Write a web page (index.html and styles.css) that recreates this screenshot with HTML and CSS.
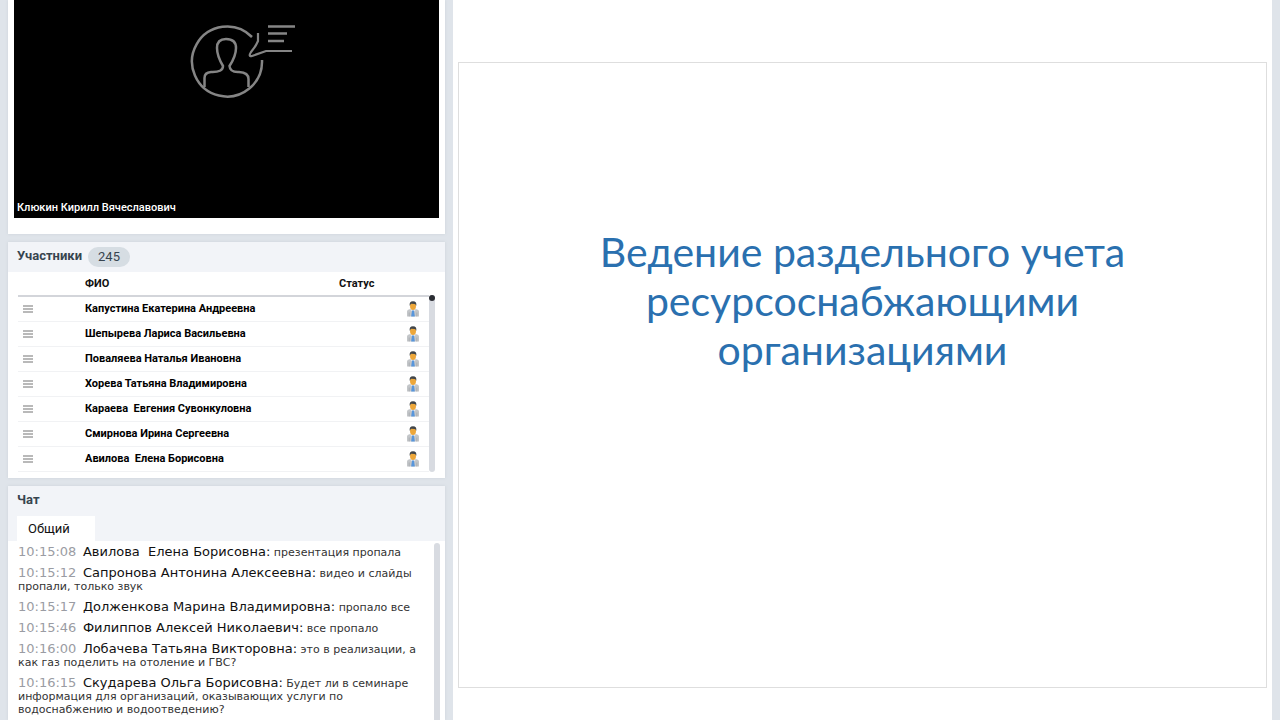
FILE: index.html
```
<!DOCTYPE html>
<html lang="ru">
<head>
<meta charset="utf-8">
<meta name="viewport" content="width=device-width, initial-scale=1">
<title>Вебинар</title>
<link rel="stylesheet" href="styles.css">
</head>
<body>
<svg class="defs" aria-hidden="true">
  <symbol id="lines" viewBox="0 0 10 9">
    <path d="M0 1h10M0 4h10M0 7h10" stroke="#a2a2a2" stroke-width="1.6" fill="none"/>
  </symbol>
  <symbol id="person" viewBox="0 0 12 16">
    <path d="M0 15.5V10.5Q0 8.6 2.5 8.2L6 7.4l3.5.8Q12 8.6 12 10.5V15.5z" fill="#c3c6c9"/>
    <path d="M2.2 11.5v4M9.8 11.5v4" stroke="#a5a8ac" stroke-width=".8"/>
    <path d="M4 7.2h4l.6 1.8L6 11.5 3.4 9z" fill="#e7ebf0"/>
    <path d="M5 9.6h2l.8 5.9H4.2z" fill="#5796dc"/>
    <ellipse cx="6" cy="5" rx="3" ry="4" fill="#eda73a"/>
    <path d="M2.8 5Q1.8.2 6 .2T9.2 5Q8.7 2.9 7.6 2.9L4.3 2.8Q3.3 3.3 2.8 5z" fill="#41464a"/>
  </symbol>
</svg>
<main class="app">
  <div class="side">
    <section class="card video-card">
      <div class="video">
        <svg class="speaker" viewBox="0 0 106 76" aria-hidden="true">
          <g fill="none" stroke="#858585" stroke-width="2.5">
            <path d="M62 13A35 35 0 1 0 72 36"/>
            <path d="M14.500 63V54Q14.500 48.500 21 48Q33 48.500 33 42Q27 32 27 24Q27 15 36 15Q46 15 46 24Q46 32 39.500 42Q40 48.500 49 48Q58.500 48.500 58.500 55V63"/>
            <path d="M68 9V17Q66 22 61 28Q58 33 62 32L76 27H102" stroke-width="2.2"/>
            <path d="M78 2.500H105M78 9.500H97M78 17H94"/>
          </g>
        </svg>
        <p class="speaker-name">Клюкин Кирилл Вячеславович</p>
      </div>
    </section>

    <section class="card people">
      <header class="head"><h2>Участники</h2><span class="count">245</span></header>
      <div class="people-body">
        <table>
          <thead><tr><th class="c-menu"></th><th class="c-name">ФИО</th><th class="c-status">Статус</th></tr></thead>
          <tbody>
            <tr><td><button class="menu" aria-label="Меню"><svg><use href="#lines"/></svg></button></td><td>Капустина Екатерина Андреевна</td><td class="st"><svg><use href="#person"/></svg></td></tr>
            <tr><td><button class="menu" aria-label="Меню"><svg><use href="#lines"/></svg></button></td><td>Шепырева Лариса Васильевна</td><td class="st"><svg><use href="#person"/></svg></td></tr>
            <tr><td><button class="menu" aria-label="Меню"><svg><use href="#lines"/></svg></button></td><td>Поваляева Наталья Ивановна</td><td class="st"><svg><use href="#person"/></svg></td></tr>
            <tr><td><button class="menu" aria-label="Меню"><svg><use href="#lines"/></svg></button></td><td>Хорева Татьяна Владимировна</td><td class="st"><svg><use href="#person"/></svg></td></tr>
            <tr><td><button class="menu" aria-label="Меню"><svg><use href="#lines"/></svg></button></td><td>Караева&nbsp; Евгения Сувонкуловна</td><td class="st"><svg><use href="#person"/></svg></td></tr>
            <tr><td><button class="menu" aria-label="Меню"><svg><use href="#lines"/></svg></button></td><td>Смирнова Ирина Сергеевна</td><td class="st"><svg><use href="#person"/></svg></td></tr>
            <tr><td><button class="menu" aria-label="Меню"><svg><use href="#lines"/></svg></button></td><td>Авилова&nbsp; Елена Борисовна</td><td class="st"><svg><use href="#person"/></svg></td></tr>
          </tbody>
        </table>
        <div class="track"><div class="thumb"></div></div>
      </div>
    </section>

    <section class="card chat">
      <header class="chat-head">
        <h2>Чат</h2>
        <button class="tab">Общий</button>
      </header>
      <div class="chat-body">
        <div class="messages">
          <p><time>10:15:08</time> <b>Авилова&nbsp; Елена Борисовна:</b> презентация пропала</p>
          <p><time>10:15:12</time> <b>Сапронова Антонина Алексеевна:</b> видео и слайды пропали, только звук</p>
          <p><time>10:15:17</time> <b>Долженкова Марина Владимировна:</b> пропало все</p>
          <p><time>10:15:46</time> <b>Филиппов Алексей Николаевич:</b> все пропало</p>
          <p><time>10:16:00</time> <b>Лобачева Татьяна Викторовна:</b> это в реализации, а как газ поделить на отоление и ГВС?</p>
          <p><time>10:16:15</time> <b>Скударева Ольга Борисовна:</b> Будет ли в семинаре информация для организаций, оказывающих услуги по водоснабжению и водоотведению?</p>
        </div>
        <div class="chat-track"></div>
      </div>
    </section>
  </div>

  <section class="stage">
    <div class="slide">
      <h1>Ведение раздельного учета<br>ресурсоснабжающими<br>организациями</h1>
    </div>
  </section>
</main>
</body>
</html>
```
FILE: styles.css
```
* { box-sizing: border-box; }
body {
  margin: 0;
  background: #dfe4ea;
  color: #111;
  font-family: Roboto, "Noto Sans", sans-serif;
  font-size: 11px;
}
h1, h2, p { margin: 0; }
button { border: 0; padding: 0; background: none; font: inherit; color: inherit; }
.defs { display: none; }

.app {
  display: grid;
  grid-template-columns: 437fr 819fr;
  gap: 8px;
  height: 100vh;
  padding: 0 8px;
  overflow: hidden;
}
.side { display: flex; flex-direction: column; gap: 8px; min-width: 0; min-height: 0; }
.card { background: #fff; box-shadow: 0 0 3px #cdd3d9; }

.video-card { padding: 0 6px 16px; }
.video {
  display: flex;
  flex-direction: column;
  justify-content: space-between;
  height: 218px;
  padding: 24px 3px 3px;
  background: #000;
}
.speaker { width: 106px; height: 76px; margin-left: 173px; }
.speaker-name { color: #fff; font-weight: 500; line-height: 14px; }

.head { display: flex; align-items: center; gap: 6px; height: 30px; padding: 0 9px; background: #f2f4f8; }
h2 { font-size: 13px; line-height: 16px; font-weight: 700; color: #37444f; }
.head h2 { padding-bottom: 2px; }
.count {
  min-width: 42px;
  border-radius: 10px;
  background: #d6dde3;
  color: #37444f;
  font-size: 13px;
  line-height: 20px;
  text-align: center;
}

.people-body { display: flex; padding: 0 10px 6px; }
table { flex: 1; border-collapse: collapse; table-layout: fixed; }
th { height: 24px; padding: 0; border-bottom: 2px solid #d3d5da; text-align: left; font-weight: 700; }
.c-menu { width: 67px; }
.c-status { width: 90px; }
td { height: 25px; padding: 0; border-bottom: 1px solid #f1f2f4; color: #000; font-weight: 700; }
.menu { display: block; padding: 2px 0 0 5px; }
.menu svg { display: block; width: 10px; height: 9px; }
.st svg { display: block; width: 12px; height: 16px; margin: 0 10px 0 auto; }
.track { width: 6px; margin-top: 23px; border-radius: 3px; background: #d8dbe1; }
.thumb { height: 6px; border-radius: 3px; background: #2b2d33; }

.chat { display: flex; flex: 1; flex-direction: column; min-height: 0; overflow: hidden; }
.chat-head { padding: 6px 9px 0; background: #f2f4f8; }
.tab {
  display: block;
  width: 78px;
  height: 25px;
  margin-top: 8px;
  padding-left: 11px;
  background: #fff;
  font-size: 13px;
  text-align: left;
}
.chat-body { display: flex; flex: 1; min-height: 0; padding: 2px 5px 0 10px; }
.messages {
  flex: 1;
  padding: 1px 12px 0 0;
  overflow: hidden;
  font-family: "DejaVu Sans", Verdana, sans-serif;
  font-size: 11px;
  line-height: 13px;
  color: #333;
}
.messages p { margin-bottom: 6px; }
.messages time, .messages b { font-size: 13px; line-height: 15px; font-weight: 400; }
.messages time { margin-right: 3px; color: #9a9ca3; }
.messages b { color: #111; }
.chat-track { width: 6px; border-radius: 3px 3px 0 0; background: #d8dbe1; }

.stage { display: flex; padding: 62px 5px 32px; background: #fff; }
.slide {
  flex: 1;
  padding: 164px 20px 0;
  border: 1px solid #dedede;
  text-align: center;
}
h1 {
  color: #2a70af;
  font-family: Lato, "Open Sans", sans-serif;
  font-size: 41px;
  font-weight: 400;
  line-height: 49px;
}
```
